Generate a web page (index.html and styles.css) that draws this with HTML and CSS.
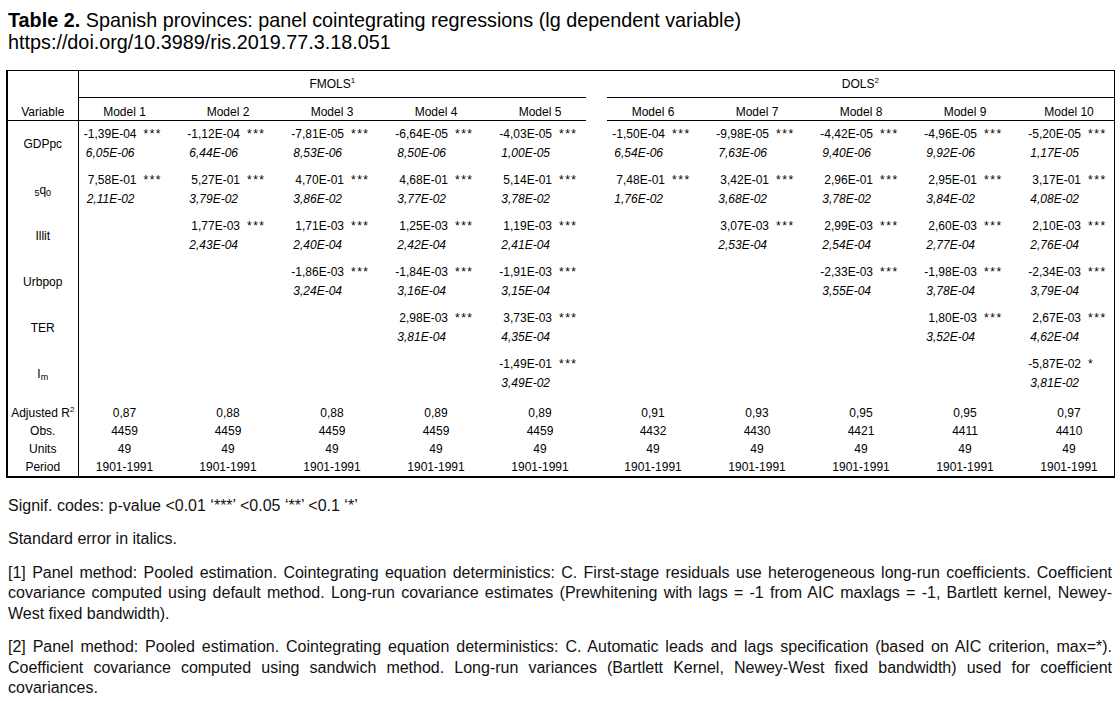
FILE: index.html
```html
<!DOCTYPE html>
<html lang="en">
<head>
<meta charset="utf-8">
<title>Table 2. Spanish provinces: panel cointegrating regressions</title>
<link rel="stylesheet" href="styles.css">
</head>
<body>
<div class="page">
  <h1 class="caption"><b>Table 2.</b> Spanish provinces: panel cointegrating regressions (lg dependent variable)<br>https://doi.org/10.3989/ris.2019.77.3.18.051</h1>

  <table class="reg">
    <colgroup>
      <col class="c-var">
      <col class="c-m"><col class="c-m"><col class="c-m"><col class="c-m"><col class="c-m5">
      <col class="c-gap">
      <col class="c-m"><col class="c-m"><col class="c-m"><col class="c-m"><col class="c-m10">
    </colgroup>
    <thead>
      <tr class="grp-row">
        <th rowspan="2" class="var head-var">Variable</th>
        <th colspan="5" class="grp">FMOLS<sup>1</sup></th>
        <th class="gap"></th>
        <th colspan="5" class="grp">DOLS<sup>2</sup></th>
      </tr>
      <tr class="model-row">
        <th class="mh"><span class="m">Model 1</span></th>
        <th class="mh"><span class="m">Model 2</span></th>
        <th class="mh"><span class="m">Model 3</span></th>
        <th class="mh"><span class="m">Model 4</span></th>
        <th class="mh"><span class="m">Model 5</span></th>
        <th class="gap"></th>
        <th class="mh"><span class="m">Model 6</span></th>
        <th class="mh"><span class="m">Model 7</span></th>
        <th class="mh"><span class="m">Model 8</span></th>
        <th class="mh"><span class="m">Model 9</span></th>
        <th class="mh"><span class="m">Model 10</span></th>
      </tr>
    </thead>
    <tbody>
      <tr class="est">
        <th class="var">GDPpc</th>
        <td><span class="c"><span class="v">-1,39E-04</span><span class="s">***</span></span><span class="se">6,05E-06</span></td>
        <td><span class="c"><span class="v">-1,12E-04</span><span class="s">***</span></span><span class="se">6,44E-06</span></td>
        <td><span class="c"><span class="v">-7,81E-05</span><span class="s">***</span></span><span class="se">8,53E-06</span></td>
        <td><span class="c"><span class="v">-6,64E-05</span><span class="s">***</span></span><span class="se">8,50E-06</span></td>
        <td><span class="c"><span class="v">-4,03E-05</span><span class="s">***</span></span><span class="se">1,00E-05</span></td>
        <td class="gap"></td>
        <td><span class="c"><span class="v">-1,50E-04</span><span class="s">***</span></span><span class="se">6,54E-06</span></td>
        <td><span class="c"><span class="v">-9,98E-05</span><span class="s">***</span></span><span class="se">7,63E-06</span></td>
        <td><span class="c"><span class="v">-4,42E-05</span><span class="s">***</span></span><span class="se">9,40E-06</span></td>
        <td><span class="c"><span class="v">-4,96E-05</span><span class="s">***</span></span><span class="se">9,92E-06</span></td>
        <td><span class="c"><span class="v">-5,20E-05</span><span class="s">***</span></span><span class="se">1,17E-05</span></td>
      </tr>
      <tr class="est">
        <th class="var"><sub>5</sub>q<sub>0</sub></th>
        <td><span class="c"><span class="v">7,58E-01</span><span class="s">***</span></span><span class="se">2,11E-02</span></td>
        <td><span class="c"><span class="v">5,27E-01</span><span class="s">***</span></span><span class="se">3,79E-02</span></td>
        <td><span class="c"><span class="v">4,70E-01</span><span class="s">***</span></span><span class="se">3,86E-02</span></td>
        <td><span class="c"><span class="v">4,68E-01</span><span class="s">***</span></span><span class="se">3,77E-02</span></td>
        <td><span class="c"><span class="v">5,14E-01</span><span class="s">***</span></span><span class="se">3,78E-02</span></td>
        <td class="gap"></td>
        <td><span class="c"><span class="v">7,48E-01</span><span class="s">***</span></span><span class="se">1,76E-02</span></td>
        <td><span class="c"><span class="v">3,42E-01</span><span class="s">***</span></span><span class="se">3,68E-02</span></td>
        <td><span class="c"><span class="v">2,96E-01</span><span class="s">***</span></span><span class="se">3,78E-02</span></td>
        <td><span class="c"><span class="v">2,95E-01</span><span class="s">***</span></span><span class="se">3,84E-02</span></td>
        <td><span class="c"><span class="v">3,17E-01</span><span class="s">***</span></span><span class="se">4,08E-02</span></td>
      </tr>
      <tr class="est">
        <th class="var">Illit</th>
        <td></td>
        <td><span class="c"><span class="v">1,77E-03</span><span class="s">***</span></span><span class="se">2,43E-04</span></td>
        <td><span class="c"><span class="v">1,71E-03</span><span class="s">***</span></span><span class="se">2,40E-04</span></td>
        <td><span class="c"><span class="v">1,25E-03</span><span class="s">***</span></span><span class="se">2,42E-04</span></td>
        <td><span class="c"><span class="v">1,19E-03</span><span class="s">***</span></span><span class="se">2,41E-04</span></td>
        <td class="gap"></td>
        <td></td>
        <td><span class="c"><span class="v">3,07E-03</span><span class="s">***</span></span><span class="se">2,53E-04</span></td>
        <td><span class="c"><span class="v">2,99E-03</span><span class="s">***</span></span><span class="se">2,54E-04</span></td>
        <td><span class="c"><span class="v">2,60E-03</span><span class="s">***</span></span><span class="se">2,77E-04</span></td>
        <td><span class="c"><span class="v">2,10E-03</span><span class="s">***</span></span><span class="se">2,76E-04</span></td>
      </tr>
      <tr class="est">
        <th class="var">Urbpop</th>
        <td></td>
        <td></td>
        <td><span class="c"><span class="v">-1,86E-03</span><span class="s">***</span></span><span class="se">3,24E-04</span></td>
        <td><span class="c"><span class="v">-1,84E-03</span><span class="s">***</span></span><span class="se">3,16E-04</span></td>
        <td><span class="c"><span class="v">-1,91E-03</span><span class="s">***</span></span><span class="se">3,15E-04</span></td>
        <td class="gap"></td>
        <td></td>
        <td></td>
        <td><span class="c"><span class="v">-2,33E-03</span><span class="s">***</span></span><span class="se">3,55E-04</span></td>
        <td><span class="c"><span class="v">-1,98E-03</span><span class="s">***</span></span><span class="se">3,78E-04</span></td>
        <td><span class="c"><span class="v">-2,34E-03</span><span class="s">***</span></span><span class="se">3,79E-04</span></td>
      </tr>
      <tr class="est">
        <th class="var">TER</th>
        <td></td>
        <td></td>
        <td></td>
        <td><span class="c"><span class="v">2,98E-03</span><span class="s">***</span></span><span class="se">3,81E-04</span></td>
        <td><span class="c"><span class="v">3,73E-03</span><span class="s">***</span></span><span class="se">4,35E-04</span></td>
        <td class="gap"></td>
        <td></td>
        <td></td>
        <td></td>
        <td><span class="c"><span class="v">1,80E-03</span><span class="s">***</span></span><span class="se">3,52E-04</span></td>
        <td><span class="c"><span class="v">2,67E-03</span><span class="s">***</span></span><span class="se">4,62E-04</span></td>
      </tr>
      <tr class="est">
        <th class="var">I<sub>m</sub></th>
        <td></td>
        <td></td>
        <td></td>
        <td></td>
        <td><span class="c"><span class="v">-1,49E-01</span><span class="s">***</span></span><span class="se">3,49E-02</span></td>
        <td class="gap"></td>
        <td></td>
        <td></td>
        <td></td>
        <td></td>
        <td><span class="c"><span class="v">-5,87E-02</span><span class="s">*</span></span><span class="se">3,81E-02</span></td>
      </tr>
      <tr class="stat first">
        <th class="var">Adjusted R<sup>2</sup></th>
        <td><span class="m">0,87</span></td>
        <td><span class="m">0,88</span></td>
        <td><span class="m">0,88</span></td>
        <td><span class="m">0,89</span></td>
        <td><span class="m">0,89</span></td>
        <td class="gap"></td>
        <td><span class="m">0,91</span></td>
        <td><span class="m">0,93</span></td>
        <td><span class="m">0,95</span></td>
        <td><span class="m">0,95</span></td>
        <td><span class="m">0,97</span></td>
      </tr>
      <tr class="stat">
        <th class="var">Obs.</th>
        <td><span class="m">4459</span></td>
        <td><span class="m">4459</span></td>
        <td><span class="m">4459</span></td>
        <td><span class="m">4459</span></td>
        <td><span class="m">4459</span></td>
        <td class="gap"></td>
        <td><span class="m">4432</span></td>
        <td><span class="m">4430</span></td>
        <td><span class="m">4421</span></td>
        <td><span class="m">4411</span></td>
        <td><span class="m">4410</span></td>
      </tr>
      <tr class="stat">
        <th class="var">Units</th>
        <td><span class="m">49</span></td>
        <td><span class="m">49</span></td>
        <td><span class="m">49</span></td>
        <td><span class="m">49</span></td>
        <td><span class="m">49</span></td>
        <td class="gap"></td>
        <td><span class="m">49</span></td>
        <td><span class="m">49</span></td>
        <td><span class="m">49</span></td>
        <td><span class="m">49</span></td>
        <td><span class="m">49</span></td>
      </tr>
      <tr class="stat">
        <th class="var">Period</th>
        <td><span class="m">1901-1991</span></td>
        <td><span class="m">1901-1991</span></td>
        <td><span class="m">1901-1991</span></td>
        <td><span class="m">1901-1991</span></td>
        <td><span class="m">1901-1991</span></td>
        <td class="gap"></td>
        <td><span class="m">1901-1991</span></td>
        <td><span class="m">1901-1991</span></td>
        <td><span class="m">1901-1991</span></td>
        <td><span class="m">1901-1991</span></td>
        <td><span class="m">1901-1991</span></td>
      </tr>
    </tbody>
  </table>

  <div class="notes">
    <p>Signif. codes: p-value &lt;0.01 ‘***’ &lt;0.05 ‘**’ &lt;0.1 ‘*’</p>
    <p>Standard error in italics.</p>
    <p>[1] Panel method: Pooled estimation. Cointegrating equation deterministics: C. First-stage residuals use heterogeneous long-run coefficients. Coefficient covariance computed using default method. Long-run covariance estimates (Prewhitening with lags = -1 from AIC maxlags = -1, Bartlett kernel, Newey-West fixed bandwidth).</p>
    <p>[2] Panel method: Pooled estimation. Cointegrating equation deterministics: C. Automatic leads and lags specification (based on AIC criterion, max=*). Coefficient covariance computed using sandwich method. Long-run variances (Bartlett Kernel, Newey-West fixed bandwidth) used for coefficient covariances.</p>
  </div>
</div>
</body>
</html>
```

FILE: styles.css
```css
html, body {
  margin: 0;
  padding: 0;
  background: #ffffff;
}

.page {
  width: 1120px;
  padding-top: 9px;
  font-family: "Liberation Sans", Arial, sans-serif;
  color: #000;
}

.caption {
  margin: 0 0 17px 8px;
  font-size: 19.8px;
  line-height: 22px;
  font-weight: normal;
  color: #000;
}

.caption b {
  font-weight: bold;
}

/* ---------- regression table ---------- */
.reg {
  margin-left: 6px;
  width: 1107px;
  table-layout: fixed;
  border-collapse: collapse;
  border-top: 1px solid #000;
  border-right: 1px solid #000;
  border-bottom: 2px solid #000;
  border-left: 2px solid #000;
  font-family: "Liberation Sans", Arial, sans-serif;
  font-size: 12px;
  color: #000;
}

.c-var { width: 71px; }
.c-m { width: 104px; }
.c-m5 { width: 92px; }
.c-gap { width: 21px; }
.c-m10 { width: 91px; }

.reg th,
.reg td {
  padding: 0;
  font-weight: normal;
  text-align: left;
}

.reg sup {
  font-size: 8px;
  vertical-align: 5px;
  line-height: 0;
}

.reg sub {
  font-size: 9px;
  vertical-align: -2px;
  line-height: 0;
}

.var {
  text-align: center !important;
  border-right: 1px solid #000;
  vertical-align: middle;
  white-space: nowrap;
}

.head-var {
  vertical-align: bottom !important;
  line-height: 16px;
  border-bottom: 1px solid #000;
}

.grp-row th {
  height: 26px;
}

.grp {
  text-align: center !important;
  vertical-align: middle;
  border-bottom: 1px solid #000;
}

.model-row th {
  height: 22px;
  padding-top: 6px;
  line-height: 16px;
  vertical-align: top;
  box-sizing: border-box;
}

.model-row .mh {
  border-bottom: 1px solid #000;
}

.gap {
  border: none;
}

.m {
  display: inline-block;
  width: 92px;
  text-align: center;
}

/* estimate rows */
.est td,
.est th {
  height: 46px;
  box-sizing: border-box;
}

.est td {
  vertical-align: top;
  padding: 4px 0 0 5px;
  line-height: 19px;
}

.c {
  display: flex;
  align-items: baseline;
  white-space: nowrap;
}

.v {
  display: inline-block;
  width: 53px;
  text-align: right;
}

.s {
  margin-left: 7px;
  letter-spacing: 1.5px;
}

.se {
  display: block;
  width: 53px;
  padding-right: 2px;
  box-sizing: border-box;
  text-align: right;
  font-style: italic;
}

/* summary rows */
.stat td,
.stat th {
  line-height: 18px;
  vertical-align: top;
  white-space: nowrap;
}

.stat.first td,
.stat.first th {
  padding-top: 7px;
}

/* ---------- notes ---------- */
.notes {
  margin: 18px 8px 0 8px;
  font-family: "Liberation Sans", Arial, sans-serif;
  font-size: 16px;
  line-height: 20.5px;
  color: #111;
}

.notes p {
  margin: 0 0 13px 0;
  text-align: justify;
}
```
